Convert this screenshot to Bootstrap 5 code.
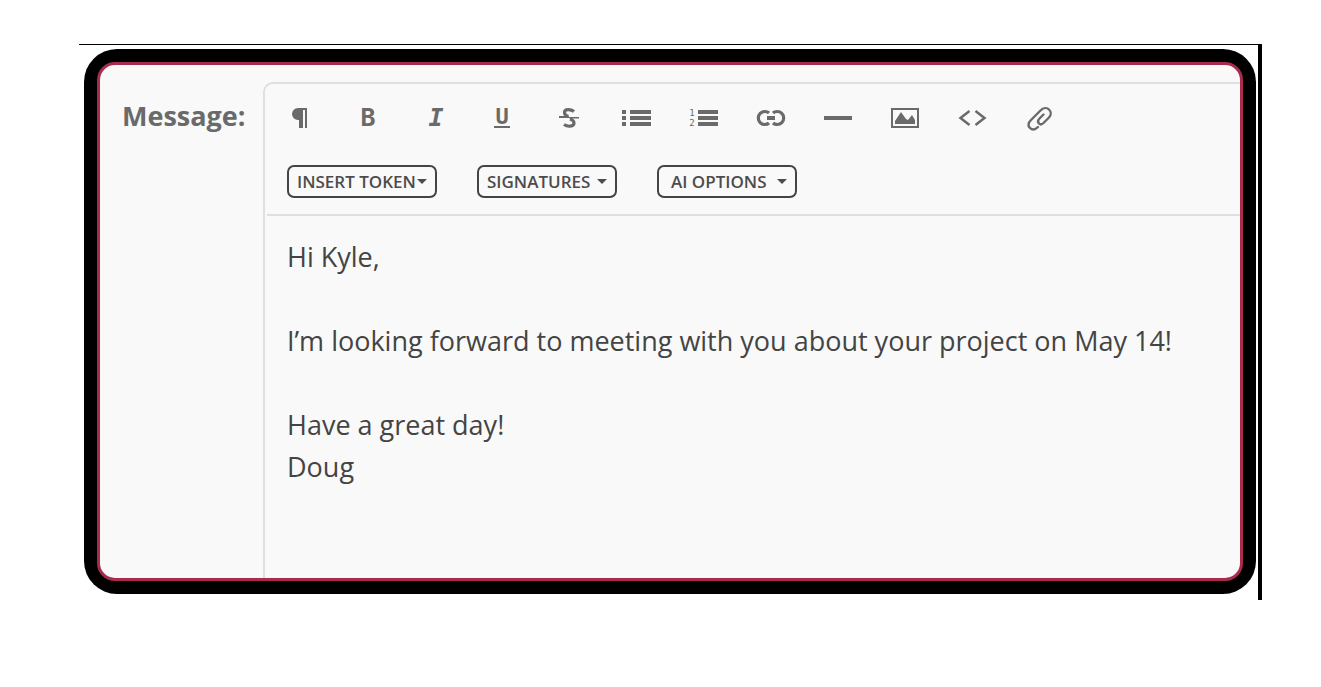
<!DOCTYPE html>
<html lang="en">
<head>
<meta charset="utf-8">
<meta name="viewport" content="width=device-width, initial-scale=1">
<title>Message editor</title>
<link href="https://cdn.jsdelivr.net/npm/bootstrap@5.3.0/dist/css/bootstrap.min.css" rel="stylesheet">
<style>
  body { font-family: "Open Sans", sans-serif; color: #444; background: #fff; }
  .stage { padding: 44px 59px 44px 79px; }
  .edge { border-top: 1px solid #000; border-right: 4px solid #000; padding: 4px 2px 6px 5px; }
  .surround { background: #000; border-radius: 33px; padding: 13px; }
  .panel { background: #f9f9f9; border: 3px solid #a92b4d; border-radius: 18px; padding: 17px 0 0 22px; }
  .message-label { width: 141px; font-size: 27px; line-height: 38px; padding-top: 15px; color: #6a6a6a; }
  .editor { border: 2px solid #dfdfdf; border-width: 2px 0 0 2px; border-top-left-radius: 10px; min-width: 0; }
  .tools { max-width: 791px; padding: 18px 0 0 19px; }
  .tool { width: 32px; height: 32px; color: #6a6a6a; line-height: 0; }
  .tool svg { width: 32px; height: 32px; fill: currentColor; }
  .tool svg .stroke { fill: none; stroke: currentColor; }
  .tool text { font-family: "DejaVu Sans Mono", monospace; font-weight: 700; text-anchor: middle; }
  .tool .digit { font-weight: 400; font-size: 9px; }
  .menus { gap: 40px; padding: 31px 0 16px 20px; margin-left: 2px; border-bottom: 2px solid #dfdfdf; }
  .menu-btn { --bs-btn-color: #4c4c4c; --bs-btn-border-color: #444; --bs-btn-hover-color: #f9f9f9; --bs-btn-hover-bg: #444;
    width: 140px; height: 33px; border-width: 2px; border-radius: 7px; padding: 0 8px; font-size: 17px; font-weight: 600; line-height: 28px; white-space: nowrap; }
  .menu-btn.wide { width: 150px; }
  .menu-btn.inset { padding-left: 12px; }
  .menu-btn::after { margin-left: 0; border-width: 5px 5px 0; }
  .compose { min-height: 362px; padding: 20px 22px; font-size: 27px; line-height: 42px; resize: none; }
  .compose, .compose:focus { background: transparent; color: #444; }
</style>
</head>
<body>
<main class="stage">
  <div class="edge">
    <div class="surround">
      <form class="panel d-flex overflow-hidden">
        <label class="message-label fw-bold flex-shrink-0" for="message">Message:</label>
        <div class="editor flex-grow-1">
          <div class="tools d-flex justify-content-between" role="toolbar" aria-label="Formatting">
            <button type="button" class="tool btn p-0 border-0" aria-label="Paragraph"><svg viewBox="0 0 32 32"><path d="M14 6h9v20h-2V8h-2v18h-4v-8h-1a6 6 0 0 1 0-12z"/></svg></button>
            <button type="button" class="tool btn p-0 border-0" aria-label="Bold"><svg viewBox="0 0 32 32"><text x="17" y="24" font-size="25">B</text></svg></button>
            <button type="button" class="tool btn p-0 border-0" aria-label="Italic"><svg viewBox="0 0 32 32"><text x="17" y="24" font-size="25" font-style="italic">I</text></svg></button>
            <button type="button" class="tool btn p-0 border-0" aria-label="Underline"><svg viewBox="0 0 32 32"><text x="16" y="22" font-size="22">U</text><path d="M8 24h16v2H8z"/></svg></button>
            <button type="button" class="tool btn p-0 border-0" aria-label="Strikethrough"><svg viewBox="0 0 32 32"><path class="stroke" stroke-width="3.200" d="M21 9.500C18 7 11.500 6.500 11.500 10.500c0 2.500 2 3.500 4 4M17 17c3 1 4 2 4 4 0 4-6.500 4-10 1.500"/><path d="M6 14h9l3 2H6zM14 15h12v1.500h-9z"/></svg></button>
            <button type="button" class="tool btn p-0 border-0" aria-label="Bulleted list"><svg viewBox="0 0 32 32"><path d="M2 8h4v4H2zm0 6h4v4H2zm0 6h4v4H2zM10 8h21v4H10zm0 6h21v4H10zm0 6h21v4H10z"/></svg></button>
            <button type="button" class="tool btn p-0 border-0" aria-label="Numbered list"><svg viewBox="0 0 32 32"><text class="digit" x="4" y="14">1</text><text class="digit" x="4" y="24">2</text><path d="M10 8h20v4H10zm0 6h20v4H10zm0 6h20v4H10z"/></svg></button>
            <button type="button" class="tool btn p-0 border-0" aria-label="Link"><svg viewBox="0 0 32 32"><path class="stroke" stroke-width="3.200" d="M14 11C13 10 12 9.500 9.800 9.500a6.500 6.500 0 0 0 0 13c2.200 0 3.200-.5 4.200-1.500M18 11c1-1 2-1.500 4.200-1.500a6.500 6.500 0 0 1 0 13C20 22.500 19 22 18 21"/><path d="M12 14h8v4h-8z"/></svg></button>
            <button type="button" class="tool btn p-0 border-0" aria-label="Horizontal line"><svg viewBox="0 0 32 32"><path d="M2 14h28v4H2z"/></svg></button>
            <button type="button" class="tool btn p-0 border-0" aria-label="Image"><svg viewBox="0 0 32 32"><path class="stroke" stroke-width="2" d="M3 7h26v18H3z"/><path d="M6 22v-3l6-9 5 7 2 1 4-5 3 5v4z"/></svg></button>
            <button type="button" class="tool btn p-0 border-0" aria-label="Code"><svg viewBox="0 0 32 32"><path class="stroke" stroke-width="2.500" d="M12.500 9L3.500 16l9 7M18.500 9l9 7-9 7"/></svg></button>
            <button type="button" class="tool btn p-0 border-0" aria-label="Attachment"><svg viewBox="0 0 32 32"><path class="stroke" stroke-width="2.400" stroke-linecap="round" stroke-linejoin="round" d="M14 25C11 28 8 28 6 26c-2-2-2-5 1-8L16.500 8.500c3-3 6.500-3 8.500-1S27.500 13 25 15.500L19.500 21c-2 2-3.500 1.500-4.500.5s-1.500-3 .5-5l4-4"/></svg></button>
          </div>
          <div class="menus d-flex">
            <button type="button" class="menu-btn wide btn dropdown-toggle d-flex align-items-center justify-content-between" data-bs-toggle="dropdown">INSERT TOKEN</button>
            <button type="button" class="menu-btn btn dropdown-toggle d-flex align-items-center justify-content-between" data-bs-toggle="dropdown">SIGNATURES</button>
            <button type="button" class="menu-btn inset btn dropdown-toggle d-flex align-items-center justify-content-between" data-bs-toggle="dropdown">AI OPTIONS</button>
          </div>
          <textarea id="message" class="compose d-block w-100 border-0 shadow-none" spellcheck="false">Hi Kyle,

I’m looking forward to meeting with you about your project on May 14!

Have a great day!
Doug</textarea>
        </div>
      </form>
    </div>
  </div>
</main>
<script src="https://cdn.jsdelivr.net/npm/bootstrap@5.3.0/dist/js/bootstrap.bundle.min.js"></script>
</body>
</html>
